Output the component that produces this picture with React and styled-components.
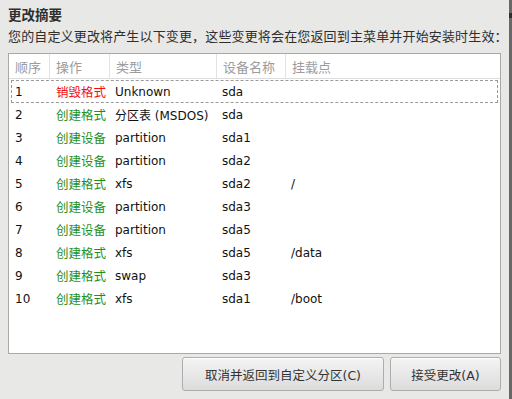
import styled, { createGlobalStyle } from "styled-components";

const GlobalStyle = createGlobalStyle`
  html, body {
    margin: 0;
    padding: 0;
    background: #e8e8e7;
  }
  body {
    font-family: "DejaVu Sans", "Noto Sans CJK SC", sans-serif;
  }
`;

const Window = styled.div`
  display: flex;
  width: 512px;
  height: 399px;
  overflow: hidden;
  background: #e8e8e7;
`;

const Main = styled.div`
  flex: 1;
  display: flex;
  flex-direction: column;
  padding: 6px 8px 8px 8px;
  box-sizing: border-box;
  min-width: 0;
`;

const Edge = styled.div`
  width: 3px;
  background: #686868;
  display: flex;
  flex-direction: column;

  &::before {
    content: "";
    height: 5px;
    margin-top: 13px;
    background: #2e2e2e;
  }
`;

const Title = styled.h1`
  margin: 0;
  font-size: 13.5px;
  line-height: 18px;
  font-weight: bold;
  color: #2e2e2e;
`;

const Subtitle = styled.p`
  margin: 4px 0 0 0;
  font-size: 13px;
  line-height: 18px;
  color: #2e2e2e;
  white-space: nowrap;
  letter-spacing: 0.15px;
`;

const Panel = styled.div`
  margin-top: 7px;
  height: 301px;
  background: #fff;
  border: 1px solid #a9a9a9;
  box-sizing: border-box;
`;

const Table = styled.div`
  display: flex;
  flex-direction: column;
  font-size: 12px;
`;

const cols = "41px 60px 107px 69px 1fr";

const HeadRow = styled.div`
  display: grid;
  grid-template-columns: ${cols};
  height: 24px;
  border-bottom: 1px solid #dcdcdc;
  margin-bottom: 1px;
`;

const HeadCell = styled.div`
  display: flex;
  align-items: center;
  padding-left: 6px;
  color: #9c9c9c;
  font-size: 13px;
  border-right: ${(p) => (p.$last ? "none" : "1px solid #e3e3e3")};
`;

const Row = styled.div`
  display: grid;
  grid-template-columns: ${cols};
  height: 23px;
  align-items: center;
  margin: 0 2px;
  box-sizing: border-box;
  border: 1px ${(p) => (p.$focused ? "dashed #9a9a9a" : "solid transparent")};
  color: #111;
`;

const Cell = styled.div`
  padding-left: ${(p) => p.$pad || 3}px;
  white-space: nowrap;
  color: ${(p) => p.$color || "inherit"};
  font-size: ${(p) => (p.$cjk ? "12.5px" : "12px")};
`;

const Buttons = styled.div`
  display: flex;
  justify-content: flex-end;
  gap: 6px;
  margin-top: 3px;
`;

const Button = styled.button`
  width: ${(p) => p.$w}px;
  height: 34px;
  border: 1px solid #adadad;
  border-radius: 3px;
  background: linear-gradient(#f4f4f4, #dcdcdc);
  color: #333;
  font-family: "DejaVu Sans", "Noto Sans CJK SC", sans-serif;
  font-size: 12.5px;
  padding: 0;
  box-shadow: inset 0 1px 0 #fff;
`;

const RED = "#f01010";
const GREEN = "#1f8f1f";

const rows = [
  ["1", "销毁格式", "Unknown", "sda", ""],
  ["2", "创建格式", "分区表 (MSDOS)", "sda", ""],
  ["3", "创建设备", "partition", "sda1", ""],
  ["4", "创建设备", "partition", "sda2", ""],
  ["5", "创建格式", "xfs", "sda2", "/"],
  ["6", "创建设备", "partition", "sda3", ""],
  ["7", "创建设备", "partition", "sda5", ""],
  ["8", "创建格式", "xfs", "sda5", "/data"],
  ["9", "创建格式", "swap", "sda3", ""],
  ["10", "创建格式", "xfs", "sda1", "/boot"],
];

const headers = ["顺序", "操作", "类型", "设备名称", "挂载点"];

export default function App() {
  return (
    <>
      <GlobalStyle />
      <Window>
        <Main>
          <Title>更改摘要</Title>
          <Subtitle>
            您的自定义更改将产生以下变更，这些变更将会在您返回到主菜单并开始安装时生效：
          </Subtitle>
          <Panel>
            <Table>
              <HeadRow>
                {headers.map((h, i) => (
                  <HeadCell key={h} $last={i === headers.length - 1}>
                    {h}
                  </HeadCell>
                ))}
              </HeadRow>
              {rows.map(([n, op, type, dev, mount], i) => (
                <Row key={n} $focused={i === 0}>
                  <Cell>{n}</Cell>
                  <Cell $cjk $color={op === "销毁格式" ? RED : GREEN}>
                    {op}
                  </Cell>
                  <Cell $pad={2}>{type}</Cell>
                  <Cell $pad={2}>{dev}</Cell>
                  <Cell $pad={2}>{mount}</Cell>
                </Row>
              ))}
            </Table>
          </Panel>
          <Buttons>
            <Button $w={202}>取消并返回到自定义分区(C)</Button>
            <Button $w={111}>接受更改(A)</Button>
          </Buttons>
        </Main>
        <Edge />
      </Window>
    </>
  );
}
